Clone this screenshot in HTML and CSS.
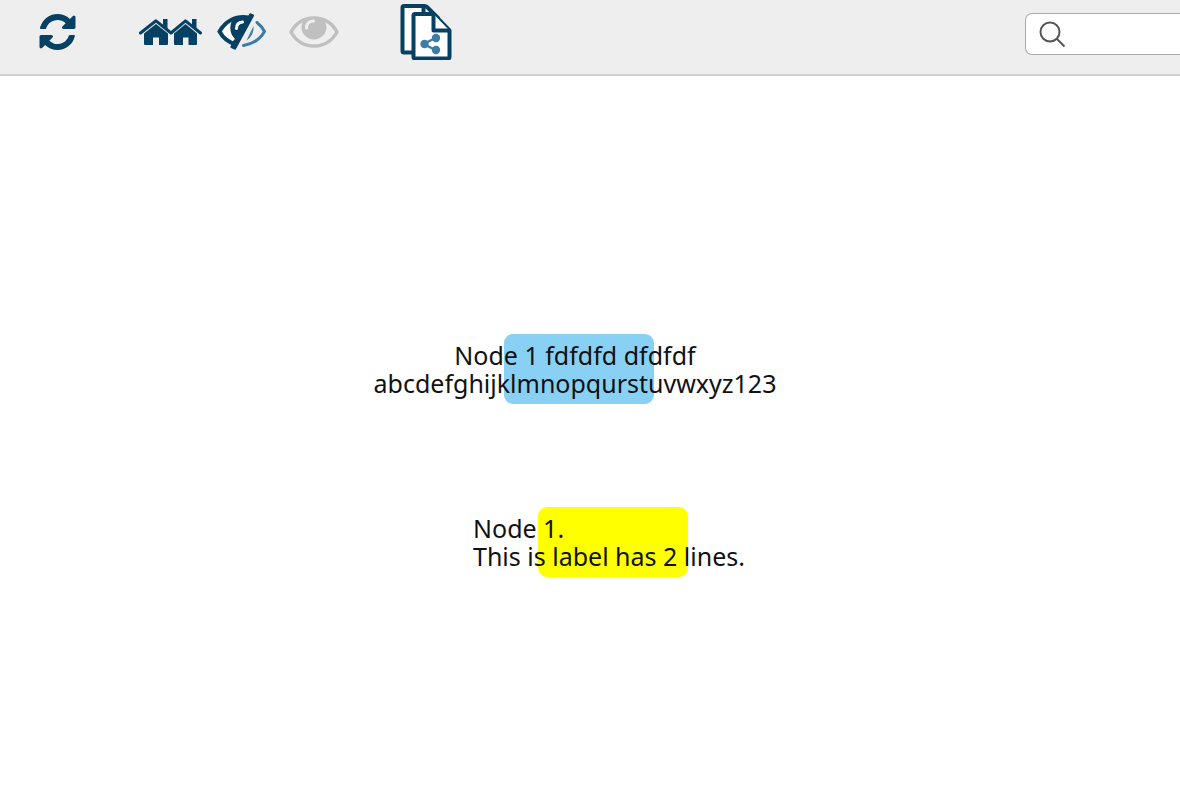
FILE: index.html
```html
<!DOCTYPE html>
<html lang="en">
<head>
<meta charset="utf-8">
<title>Network view</title>
<link rel="stylesheet" href="styles.css">
</head>
<body>
<header class="toolbar">
  <div class="tools">
    <button class="tool refresh" type="button" aria-label="Refresh">
      <svg width="37" height="36" viewBox="0 0 1536 1536"><path class="dark" d="M1511 928q0 5-1 7-64 268-268 434.500T764 1536q-146 0-282.500-55T238 1324l-129 129q-19 19-45 19t-45-19-19-45V960q0-26 19-45t45-19h448q26 0 45 19t19 45-19 45l-137 137q71 66 161 102t187 36q134 0 250-65t186-179q11-17 53-117 8-23 30-23h192q13 0 22.500 9.500t9.500 22.500zm25-800v448q0 26-19 45t-45 19h-448q-26 0-45-19t-19-45 19-45l138-138Q969 256 768 256q-134 0-250 65T332 500q-11 17-53 117-8 23-30 23H50q-13 0-22.500-9.500T18 608v-7q65-268 270-434.500T768 0q146 0 284 55.500T1297 212l130-129q19-19 45-19t45 19 19 45z"/></svg>
    </button>
    <button class="tool neighbors" type="button" aria-label="First neighbors">
      <svg width="64" height="28" viewBox="0 0 64 28">
        <path class="roof" d="M1.500 15 17 2.800 32 15 46.500 2.800 61.500 15"/>
        <path class="dark" d="M24 1H28.500V12L24 8.500zM53 1H57.500V12L53 8.500zM5 15.500 17 6 29 15.500V26Q29 27 28 27H20V19.500H14V27H6Q5 27 5 26zM35 15.500 46.500 6 58 15.500V26Q58 27 57 27H49.500V19.500H44V27H36Q35 27 35 26z"/>
      </svg>
    </button>
    <button class="tool hide" type="button" aria-label="Hide selected">
      <svg width="50" height="38" viewBox="0 0 50 38">
        <path fill="#fff" d="M2 19Q16-2 32 6L20 32Q8 30 2 19z"/>
        <path class="eye-dark" d="M32 4.500C18 2 8 9 2.500 18.500 6 25 12 29.500 19 31.500"/>
        <path class="dark" d="M15 8Q21 3 31 4L32.500 .5Q33 0 34 .5L36.500 1.500Q37.500 2 37 3L19 36Q18.500 37 17.500 36.500L14 35Q13 34.500 13.500 33.500L16 28 18 26C13 21 12 14 15 8z"/>
        <path d="M19.500 15.500Q19.500 9.500 25.500 9" fill="none" stroke="#fff" stroke-width="3" stroke-linecap="round"/>
        <path class="eye-blue" d="M40 9.500Q45 13.500 47.500 18.500 41 30 26.500 32.500"/>
        <path class="blue" d="M36.500 13Q37.500 22 29.500 27.500z"/>
      </svg>
    </button>
    <button class="tool show" type="button" aria-label="Show all" disabled>
      <svg width="50" height="34" viewBox="1 0 50 34">
        <path fill="#eee" stroke="#c0c0c0" stroke-width="3.500" stroke-linejoin="round" d="M3 17C8 8 16 3 26 3S44 8 49 17C44 26 36 31 26 31S8 26 3 17z"/>
        <path fill="#c0c0c0" d="M16 5Q26 1 36 5A13 13 0 0 1 38.500 12 12.500 12.500 0 0 1 13.500 12 13 13 0 0 1 16 5z"/>
        <path d="M18.500 13Q18.500 6.500 25.500 6" fill="none" stroke="#eee" stroke-width="3" stroke-linecap="round"/>
      </svg>
    </button>
    <button class="tool clone" type="button" aria-label="New network from selection">
      <svg width="52" height="56" viewBox="0 0 52 56">
        <g class="page">
          <path d="M4 2H24.500Q26 2 27 3L38 14V48.500H4Q2.500 48.500 2.500 47V3.500Q2.500 2 4 2z"/>
          <path d="M23.500 2V12"/>
          <path d="M15 10H33.500L49.500 26.500V53Q49.500 54.500 48 54.500H15Q13.500 54.500 13.500 53V11.500Q13.500 10 15 10z"/>
          <path d="M33.500 10V26.500H49.500"/>
        </g>
        <path d="M35.500 34 23.500 40 35.500 46" fill="none" stroke="#3c7ca5" stroke-width="2.500"/>
        <g class="blue"><circle cx="36" cy="34" r="4.200"/><circle cx="24.500" cy="40" r="4.200"/><circle cx="36" cy="46" r="4.200"/></g>
      </svg>
    </button>
  </div>
  <div class="search">
    <label for="query" aria-label="Search"><svg width="28" height="28" viewBox="0 0 28 28"><circle cx="11" cy="12" r="9.500"/><path d="M18 19 25.500 26.500"/></svg></label>
    <input id="query" type="text" aria-label="Search">
  </div>
</header>
<main class="canvas">
  <div class="node node-blue"><p class="label centered">Node 1 fdfdfd dfdfdf<br>abcdefghijklmnopqurstuvwxyz123</p></div>
  <div class="node node-yellow"><p class="label">Node 1.<br>This is label has 2 lines.</p></div>
</main>
</body>
</html>
```
FILE: styles.css
```css
* { box-sizing: border-box; }
body {
  margin: 0;
  min-height: 100vh;
  display: flex;
  flex-direction: column;
  background: #fff;
  color: #111;
  font-family: "Noto Sans", "Open Sans", sans-serif;
  overflow-x: hidden;
}
.toolbar {
  display: flex;
  justify-content: space-between;
  align-items: flex-start;
  background: #eee;
  border-bottom: 2px solid #d2d2d2;
  height: 76px;
}
.tools {
  display: flex;
  align-items: center;
  height: 64px;
  padding-left: 39px;
}
.tool {
  display: flex;
  padding: 0;
  border: 0;
  background: none;
}
.tool svg { display: block; }
.neighbors { margin-left: 63px; }
.hide { margin-left: 14px; }
.show { margin-left: 22px; }
.clone { margin-left: 61px; }
.dark { fill: #064062; }
.blue { fill: #3c7ca5; }
.roof {
  fill: none;
  stroke: #064062;
  stroke-width: 3;
  stroke-linecap: round;
  stroke-linejoin: round;
}
.eye-dark {
  fill: none;
  stroke: #064062;
  stroke-width: 4;
}
.eye-blue {
  fill: none;
  stroke: #3c7ca5;
  stroke-width: 3;
  stroke-linecap: round;
  stroke-linejoin: round;
}
.page path {
  fill: #fff;
  stroke: #064062;
  stroke-width: 4;
  stroke-linejoin: round;
}
.search {
  display: flex;
  align-items: center;
  width: 155px;
  height: 42px;
  margin-top: 13px;
  padding-left: 13px;
  background: #fff;
  border: 1px solid #aaa;
  border-right: 0;
  border-radius: 7px 0 0 7px;
}
.search label { display: flex; }
.search svg {
  fill: none;
  stroke: #555;
  stroke-width: 2;
}
.search input {
  flex: 1;
  min-width: 0;
  height: 32px;
  border: 0;
  outline: 0;
  background: transparent;
  font: inherit;
  font-size: 20px;
}
.canvas {
  position: relative;
  flex: 1;
}
.node {
  position: absolute;
  display: flex;
  align-items: center;
  justify-content: center;
  width: 150px;
  height: 70px;
  border-radius: 9px;
}
.node-blue {
  left: 504px;
  top: 258px;
  background: #89d0f5;
}
.node-yellow {
  left: 538px;
  top: 431px;
  background: #ff0;
}
.label {
  flex: none;
  margin: 0 8px 0 0;
  font-size: 25px;
  line-height: 28px;
  white-space: nowrap;
}
.centered { text-align: center; }
```
